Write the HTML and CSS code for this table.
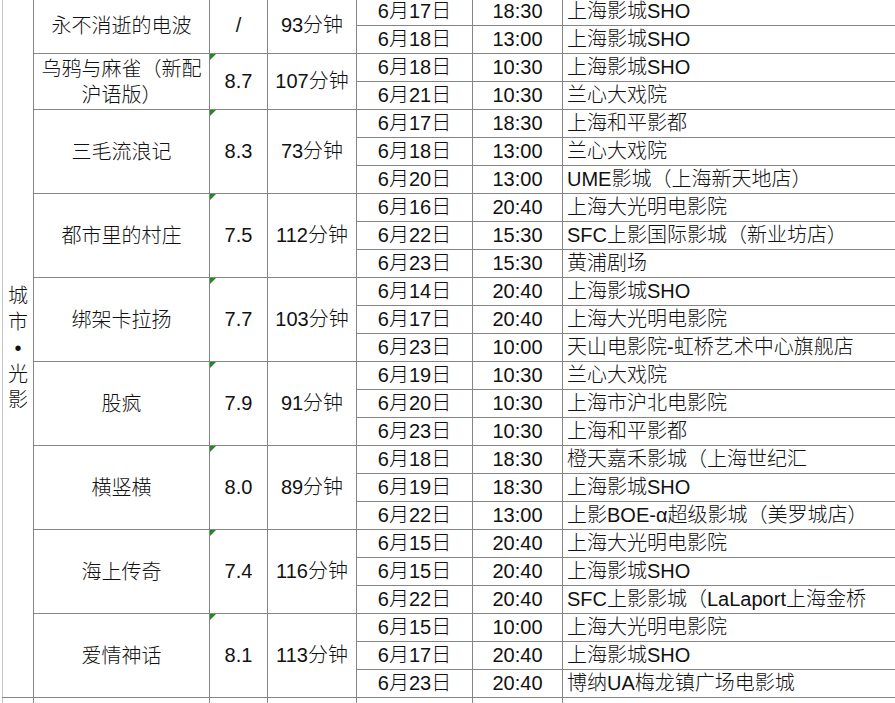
FILE: index.html
```html
<!DOCTYPE html>
<html lang="zh">
<head>
<meta charset="utf-8">
<title>城市•光影</title>
<link rel="stylesheet" href="styles.css">
</head>
<body>
<div class="sheet">
<table class="grid">
<colgroup>
<col class="c-cat"><col class="c-name"><col class="c-rate"><col class="c-dur"><col class="c-date"><col class="c-time"><col class="c-venue">
</colgroup>
<tbody>
<tr>
<td class="cat" rowspan="25"><span class="vtext">城<br>市<br>•<br>光<br>影</span></td>
<td class="name" rowspan="2">永不消逝的电波</td>
<td class="rate" rowspan="2">/</td>
<td class="dur" rowspan="2">93分钟</td>
<td class="date">6月17日</td><td class="time">18:30</td><td class="venue">上海影城SHO</td>
</tr>
<tr><td class="date">6月18日</td><td class="time">13:00</td><td class="venue">上海影城SHO</td></tr>

<tr>
<td class="name" rowspan="2">乌鸦与麻雀（新配沪语版）</td>
<td class="rate flag" rowspan="2">8.7</td>
<td class="dur" rowspan="2">107分钟</td>
<td class="date">6月18日</td><td class="time">10:30</td><td class="venue">上海影城SHO</td>
</tr>
<tr><td class="date">6月21日</td><td class="time">10:30</td><td class="venue">兰心大戏院</td></tr>

<tr>
<td class="name" rowspan="3">三毛流浪记</td>
<td class="rate flag" rowspan="3">8.3</td>
<td class="dur" rowspan="3">73分钟</td>
<td class="date">6月17日</td><td class="time">18:30</td><td class="venue">上海和平影都</td>
</tr>
<tr><td class="date">6月18日</td><td class="time">13:00</td><td class="venue">兰心大戏院</td></tr>
<tr><td class="date">6月20日</td><td class="time">13:00</td><td class="venue">UME影城（上海新天地店）</td></tr>

<tr>
<td class="name" rowspan="3">都市里的村庄</td>
<td class="rate flag" rowspan="3">7.5</td>
<td class="dur" rowspan="3">112分钟</td>
<td class="date">6月16日</td><td class="time">20:40</td><td class="venue">上海大光明电影院</td>
</tr>
<tr><td class="date">6月22日</td><td class="time">15:30</td><td class="venue">SFC上影国际影城（新业坊店）</td></tr>
<tr><td class="date">6月23日</td><td class="time">15:30</td><td class="venue">黄浦剧场</td></tr>

<tr>
<td class="name" rowspan="3">绑架卡拉扬</td>
<td class="rate flag" rowspan="3">7.7</td>
<td class="dur" rowspan="3">103分钟</td>
<td class="date">6月14日</td><td class="time">20:40</td><td class="venue">上海影城SHO</td>
</tr>
<tr><td class="date">6月17日</td><td class="time">20:40</td><td class="venue">上海大光明电影院</td></tr>
<tr><td class="date">6月23日</td><td class="time">10:00</td><td class="venue">天山电影院-虹桥艺术中心旗舰店</td></tr>

<tr>
<td class="name" rowspan="3">股疯</td>
<td class="rate flag" rowspan="3">7.9</td>
<td class="dur" rowspan="3">91分钟</td>
<td class="date">6月19日</td><td class="time">10:30</td><td class="venue">兰心大戏院</td>
</tr>
<tr><td class="date">6月20日</td><td class="time">10:30</td><td class="venue">上海市沪北电影院</td></tr>
<tr><td class="date">6月23日</td><td class="time">10:30</td><td class="venue">上海和平影都</td></tr>

<tr>
<td class="name" rowspan="3">横竖横</td>
<td class="rate flag" rowspan="3">8.0</td>
<td class="dur" rowspan="3">89分钟</td>
<td class="date">6月18日</td><td class="time">18:30</td><td class="venue">橙天嘉禾影城（上海世纪汇</td>
</tr>
<tr><td class="date">6月19日</td><td class="time">18:30</td><td class="venue">上海影城SHO</td></tr>
<tr><td class="date">6月22日</td><td class="time">13:00</td><td class="venue">上影BOE-α超级影城（美罗城店）</td></tr>

<tr>
<td class="name" rowspan="3">海上传奇</td>
<td class="rate flag" rowspan="3">7.4</td>
<td class="dur" rowspan="3">116分钟</td>
<td class="date">6月15日</td><td class="time">20:40</td><td class="venue">上海大光明电影院</td>
</tr>
<tr><td class="date">6月15日</td><td class="time">20:40</td><td class="venue">上海影城SHO</td></tr>
<tr><td class="date">6月22日</td><td class="time">20:40</td><td class="venue">SFC上影影城（LaLaport上海金桥</td></tr>

<tr>
<td class="name" rowspan="3">爱情神话</td>
<td class="rate flag" rowspan="3">8.1</td>
<td class="dur" rowspan="3">113分钟</td>
<td class="date">6月15日</td><td class="time">10:00</td><td class="venue">上海大光明电影院</td>
</tr>
<tr><td class="date">6月17日</td><td class="time">20:40</td><td class="venue">上海影城SHO</td></tr>
<tr><td class="date">6月23日</td><td class="time">20:40</td><td class="venue">博纳UA梅龙镇广场电影城</td></tr>

<tr class="blank">
<td class="cat-next"></td><td></td><td></td><td></td><td></td><td></td><td></td>
</tr>
</tbody>
</table>
</div>
</body>
</html>
```
FILE: styles.css
```css
html, body {
  margin: 0;
  padding: 0;
  background: #ffffff;
}

body {
  overflow: hidden;
  font-family: "Liberation Sans", "Noto Sans CJK SC", sans-serif;
  font-size: 20px;
  font-weight: 300;
  color: #111111;
}

.sheet {
  width: 895px;
  height: 703px;
  overflow: hidden;
}

.grid {
  border-collapse: collapse;
  table-layout: fixed;
  width: 1100px;
  margin-top: -3px;
  margin-left: 2px;
}

.c-cat { width: 31px; }
.c-name { width: 176px; }
.c-rate { width: 58px; }
.c-dur { width: 89px; }
.c-date { width: 116px; }
.c-time { width: 90px; }
.c-venue { width: 540px; }

.grid td {
  border: 1px solid #858585;
  height: 27px;
  padding: 0;
  text-align: center;
  vertical-align: middle;
  white-space: nowrap;
  line-height: 25px;
}

.grid td.cat,
.grid td.cat-next {
  border-left-color: #c4c4c4;
}

.grid td.name {
  white-space: normal;
  padding: 0 6px;
  line-height: 26px;
}

.grid td.venue {
  text-align: left;
  padding-left: 4px;
}

.vtext {
  display: inline-block;
  line-height: 26px;
}

.grid td.flag {
  position: relative;
}

.grid td.flag::before {
  content: "";
  position: absolute;
  left: 0;
  top: 0;
  width: 0;
  height: 0;
  border-top: 6px solid #1f8a1f;
  border-right: 6px solid transparent;
}
```
